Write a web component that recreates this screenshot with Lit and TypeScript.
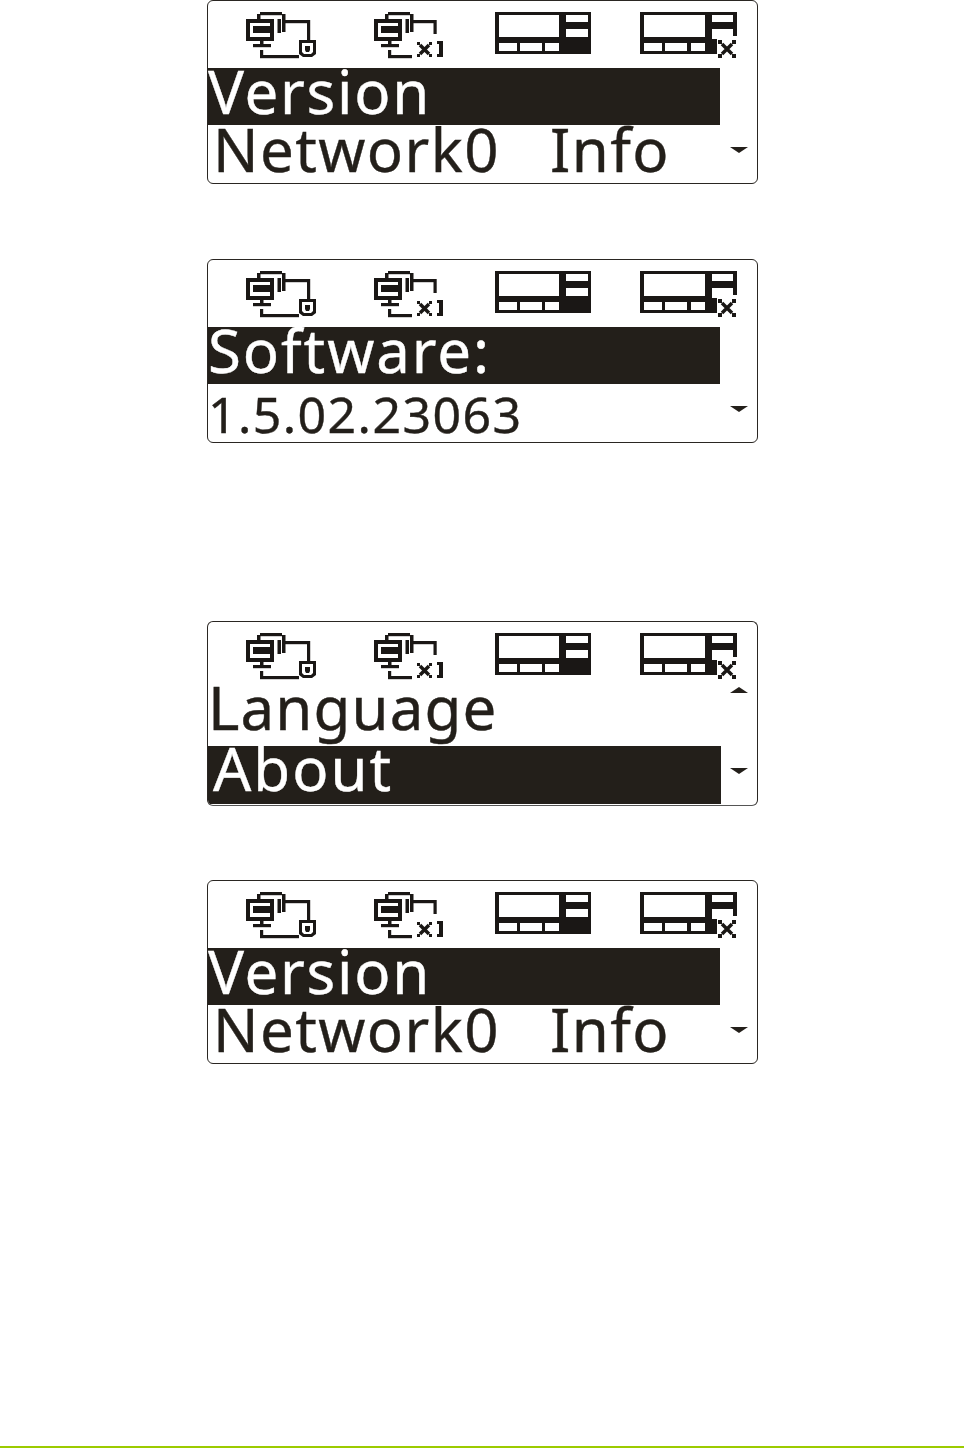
import { LitElement, html, css, svg } from "lit";
import { customElement } from "lit/decorators.js";

const netBase = (dx: number) => svg`<g transform="translate(${dx} 0)" fill="#1a1715">
  <path fill-rule="evenodd" d="M6 14h28v22H6zM10 18v14h20V18z"/>
  <rect x="13" y="21" width="17" height="7"/>
  <rect x="20" y="36" width="3.500" height="4"/>
  <rect x="13" y="39" width="18" height="3.200"/>
  <rect x="20" y="7" width="22" height="3.200"/>
  <rect x="17" y="9" width="3.500" height="5"/>
  <rect x="42" y="9" width="3.500" height="18"/>
  <rect x="37.500" y="14" width="3.500" height="14"/>
</g>`;

const netLock = svg`<svg class="ico" width="80" height="60" viewBox="0 0 80 60">${netBase(0)}
  <g fill="#1a1715"><rect x="45" y="15" width="24" height="3.200"/>
  <rect x="67" y="15" width="3.200" height="20"/>
  <path fill-rule="evenodd" d="M59 35h17v14l-4 3h-9l-4-3zM62 38v9l2 2h7l2-2v-9z"/>
  <path d="M65 41h5v4l-1 2h-3l-1-2z"/>
  <rect x="20" y="45" width="3.200" height="7"/>
  <rect x="20" y="50" width="39" height="3.200"/></g></svg>`;

const xMark = (x: number, y: number, s: number, d: number) => svg`<g fill="#1a1715">
  <rect x=${x} y=${y} width=${d} height=${d}/><rect x=${x + s - d} y=${y} width=${d} height=${d}/>
  <rect x=${x} y=${y + s - d} width=${d} height=${d}/><rect x=${x + s - d} y=${y + s - d} width=${d} height=${d}/>
  <path d="M${x + d} ${y + d}L${x + s - d} ${y + s - d}M${x + s - d} ${y + d}L${x + d} ${y + s - d}" stroke="#1a1715" stroke-width="3.500" fill="none"/></g>`;

const netOff = svg`<svg class="ico" width="80" height="60" viewBox="0 0 80 60">${netBase(-2)}
  <g fill="#1a1715"><rect x="43" y="15" width="23" height="3.200"/>
  <rect x="63.500" y="15" width="3.200" height="14"/>
  <rect x="18" y="45" width="3.200" height="7"/>
  <rect x="18" y="50" width="24" height="3.200"/>
  <path d="M67 36h6v16h-6v-3h2V39h-2z"/></g>
  ${xMark(47, 37, 15, 3)}</svg>`;

const statusFull = svg`<svg class="ico" width="110" height="60" viewBox="0 0 110 60">
  <rect x="5" y="7" width="96" height="42" fill="#1a1715"/>
  <g fill="#fff"><rect x="9" y="10" width="60" height="22"/><rect x="76" y="10" width="22" height="7"/><rect x="76" y="24" width="22" height="8"/>
  <rect x="9" y="38" width="18" height="8"/><rect x="30" y="38" width="22" height="8"/><rect x="55" y="38" width="14" height="8"/></g></svg>`;

const statusOff = svg`<svg class="ico" width="125" height="60" viewBox="0 0 125 60">
  <path fill="#1a1715" d="M5 7H102V31H98V24H77V34H82V49H5z"/>
  <g fill="#fff"><rect x="9" y="10" width="61" height="22"/><rect x="77" y="10" width="21" height="7"/>
  <rect x="9" y="38" width="18" height="8"/><rect x="30" y="38" width="22" height="8"/><rect x="56" y="38" width="14" height="8"/></g>
  ${xMark(83, 35, 18, 4)}</svg>`;

interface Row { text: string; second?: string; on?: boolean; cls: string; up?: boolean; down?: boolean }
const panels: { cls: string; rows: Row[] }[] = [
  { cls: "p1", rows: [{ text: "Version", on: true, cls: "version" }, { text: "Network0", second: "Info", cls: "net", down: true }] },
  { cls: "p2", rows: [{ text: "Software:", on: true, cls: "soft" }, { text: "1.5.02.23063", cls: "num", down: true }] },
  { cls: "p3", rows: [{ text: "Language", cls: "lang", up: true }, { text: "About", on: true, cls: "about", down: true }] },
  { cls: "p4", rows: [{ text: "Version", on: true, cls: "version" }, { text: "Network0", second: "Info", cls: "net", down: true }] },
];

@customElement("app-root")
export class AppRoot extends LitElement {
  static styles = css`
    :host { display: block; width: 964px; height: 1448px; position: relative; background: #fff; overflow: hidden;
      font-family: "Noto Sans", sans-serif; color: #231f1a; }
    .page { display: flex; flex-direction: column; align-items: flex-start; padding-left: 207px; }
    .panel { width: 551px; height: 184px; box-sizing: border-box; border: 1px solid #2a2622; border-radius: 6px; background: #fff;
      display: flex; flex-direction: column; position: relative; overflow: hidden; }
    .p1 { margin-bottom: 75px; }
    .p2 { margin-bottom: 178px; }
    .p3 { height: 185px; margin-bottom: 74px; border-bottom-color: #555; }
    .head { height: 67px; flex: none; display: grid; grid-template-columns: 130px 120px 145px 1fr; padding: 4px 0 0 32px; box-sizing: border-box; }
    .ico { display: block; }
    .p3 .head { height: 63px; }
    .row { flex: none; height: 57px; position: relative; display: flex; align-items: flex-start; font-size: 60px; letter-spacing: 1.1px; white-space: nowrap; -webkit-text-stroke: 0.4px currentColor; }
    .row + .row { height: 58px; }
    .bar { position: absolute; left: 0; top: 0; bottom: 0; width: 512px; background: #231f1a; }
    .p3 .bar { width: 513px; top: 2px; bottom: 1px; }
    .p3 .row { height: 59px; }
    .p3 .row + .row { height: 61px; }
    .label { position: relative; display: flex; color: #231f1a; }
    .label.on { color: #fff; }
    .second { margin-left: 50px; }
    .version { letter-spacing: 1.7px; line-height: 47px; }
    .net { margin-left: 5px; letter-spacing: 1.4px; line-height: 49px; }
    .soft { letter-spacing: 1.9px; line-height: 47px; }
    .num { font-size: 50px; letter-spacing: 1.4px; line-height: 60px; }
    .lang { line-height: 44px; }
    .about { margin-left: 5px; letter-spacing: 2px; line-height: 49px; }
    .arrow { position: absolute; left: 522px; width: 0; height: 0; border-left: 9px solid transparent; border-right: 9px solid transparent; }
    .arrow.down { top: 22px; border-top: 6px solid #231f1a; }
    .arrow.up { top: 2px; border-bottom: 6px solid #231f1a; }
    .p3 .arrow.down { top: 24px; }
    .rule { position: absolute; left: 0; right: 0; bottom: 0; height: 2px; background: #9ccb00; }
  `;

  render() {
    return html`<div class="page">
      ${panels.map((p) => html`<section class="panel ${p.cls}">
        <div class="head">${netLock}${netOff}${statusFull}${statusOff}</div>
        ${p.rows.map((r) => html`<div class="row">
          ${r.on ? html`<div class="bar"></div>` : ""}
          <span class="label ${r.cls} ${r.on ? "on" : ""}"><span>${r.text}</span>${r.second ? html`<span class="second">${r.second}</span>` : ""}</span>
          ${r.up ? html`<i class="arrow up"></i>` : ""}
          ${r.down ? html`<i class="arrow down"></i>` : ""}
        </div>`)}
      </section>`)}
    </div><div class="rule"></div>`;
  }
}
